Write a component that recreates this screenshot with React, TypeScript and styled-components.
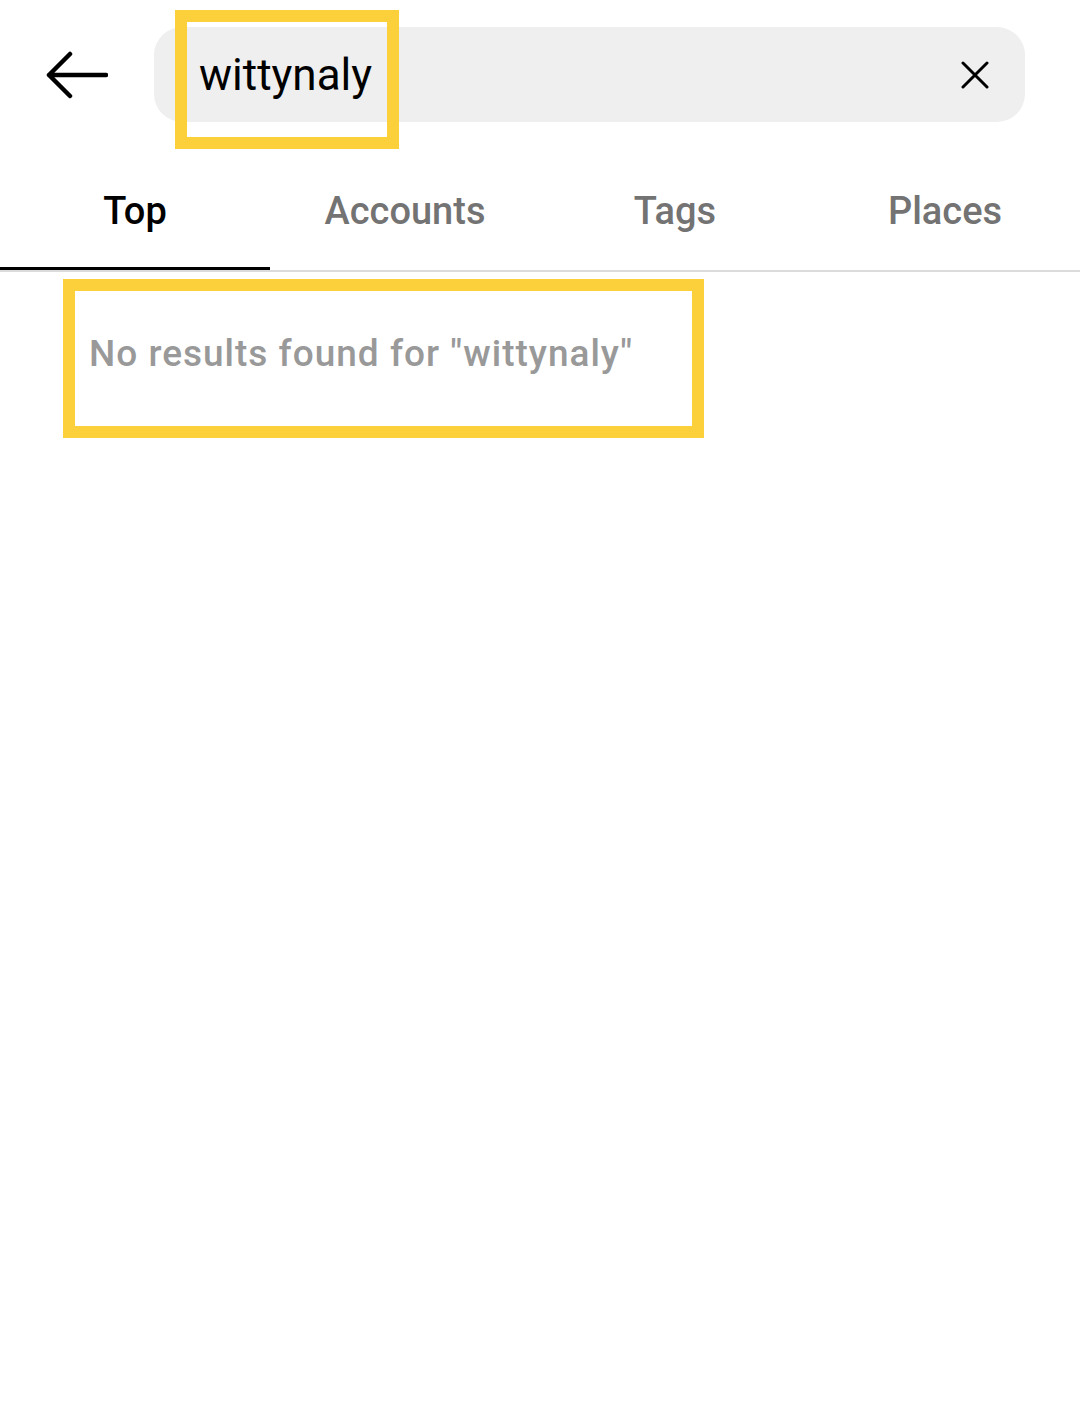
import React from "react";
import styled, { createGlobalStyle } from "styled-components";

const GlobalStyle = createGlobalStyle`
  html, body {
    margin: 0;
    padding: 0;
    background: #ffffff;
  }
  body {
    font-family: Roboto, "Noto Sans", "Liberation Sans", sans-serif;
    -webkit-font-smoothing: antialiased;
  }
  * { box-sizing: border-box; }
`;

const Page = styled.div`
  width: 1080px;
  min-height: 1403px;
  background: #ffffff;
  display: flex;
  flex-direction: column;
`;

const Header = styled.header`
  display: flex;
  align-items: center;
  padding: 27px 55px 0 46px;
`;

const BackButton = styled.button`
  width: 62px;
  height: 48px;
  margin-right: 46px;
  padding: 0;
  border: 0;
  background: transparent;
  display: flex;
  align-items: center;
  justify-content: center;
  color: #000000;
  flex-shrink: 0;
`;

const SearchBar = styled.div`
  flex: 1;
  height: 95px;
  border-radius: 28px;
  background: #efefef;
  display: flex;
  align-items: center;
  justify-content: space-between;
  padding: 0 36px 0 45px;
`;

const QueryText = styled.span`
  position: relative;
  font-size: 44px;
  line-height: 50px;
  font-weight: 400;
  color: #000000;
`;

const Highlight = styled.span<{ $top: number; $right: number; $bottom: number; $left: number }>`
  position: absolute;
  top: ${(p) => p.$top}px;
  right: ${(p) => p.$right}px;
  bottom: ${(p) => p.$bottom}px;
  left: ${(p) => p.$left}px;
  border: 12px solid #fcd03b;
  pointer-events: none;
`;

const ClearButton = styled.button`
  width: 28px;
  height: 28px;
  padding: 0;
  border: 0;
  background: transparent;
  display: flex;
  align-items: center;
  justify-content: center;
  color: #000000;
`;

const TabBar = styled.nav`
  display: grid;
  grid-template-columns: repeat(4, 1fr);
  border-bottom: 2px solid #dbdbdb;
`;

const Tab = styled.div<{ $active?: boolean }>`
  height: 148px;
  padding-top: 67px;
  text-align: center;
  font-size: 38px;
  line-height: 44px;
  font-weight: 500;
  color: ${(p) => (p.$active ? "#000000" : "#737373")};
  border-bottom: 3px solid ${(p) => (p.$active ? "#000000" : "transparent")};
`;

const Results = styled.section`
  padding: 61px 0 0 89px;
`;

const EmptyMessage = styled.span`
  position: relative;
  display: inline-block;
  font-size: 37px;
  line-height: 42px;
  font-weight: 500;
  letter-spacing: 1px;
  color: #999999;
`;

const BackArrowIcon = () => (
  <svg width="62" height="48" viewBox="0 0 62 48" fill="none">
    <path
      d="M3 24 H60 M24 3 L3 24 L24 45"
      stroke="currentColor"
      strokeWidth="4.5"
      strokeLinecap="round"
      strokeLinejoin="round"
    />
  </svg>
);

const CloseIcon = () => (
  <svg width="28" height="28" viewBox="0 0 28 28" fill="none">
    <path
      d="M2 2 L26 26 M26 2 L2 26"
      stroke="currentColor"
      strokeWidth="3"
      strokeLinecap="round"
    />
  </svg>
);

const tabs = ["Top", "Accounts", "Tags", "Places"];
const query = "wittynaly";

export default function App() {
  return (
    <Page>
      <GlobalStyle />
      <Header>
        <BackButton aria-label="Back">
          <BackArrowIcon />
        </BackButton>
        <SearchBar>
          <QueryText>
            {query}
            <Highlight $top={-40} $right={-27} $bottom={-49} $left={-24} />
          </QueryText>
          <ClearButton aria-label="Clear">
            <CloseIcon />
          </ClearButton>
        </SearchBar>
      </Header>
      <TabBar>
        {tabs.map((t) => (
          <Tab key={t} $active={t === "Top"}>
            {t}
          </Tab>
        ))}
      </TabBar>
      <Results>
        <EmptyMessage>
          No results found for "{query}"
          <Highlight $top={-54} $right={-71} $bottom={-63} $left={-26} />
        </EmptyMessage>
      </Results>
    </Page>
  );
}
